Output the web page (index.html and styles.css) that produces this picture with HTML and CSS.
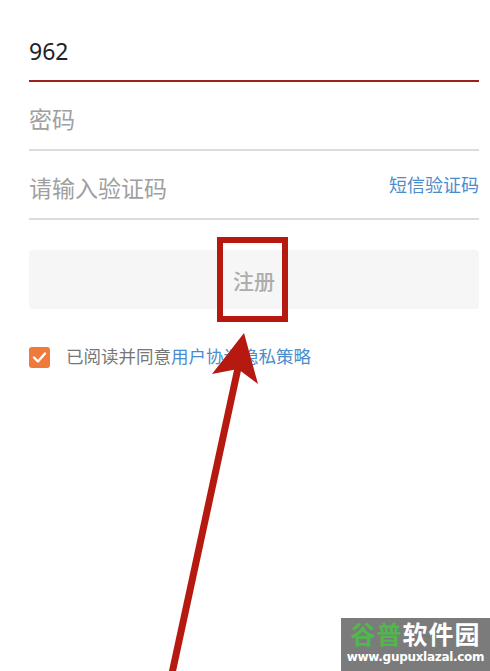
FILE: index.html
```html
<!DOCTYPE html>
<html lang="zh-CN">
<head>
    <meta charset="UTF-8">
    <meta name="viewport" content="width=device-width, initial-scale=1.0">
    <title>注册</title>
    <link rel="stylesheet" href="styles.css">
</head>
<body>
    <div class="form">
        <div class="field field-active">
            <span class="value">962</span>
        </div>
        <div class="field">
            <span class="placeholder">密码</span>
        </div>
        <div class="field">
            <span class="placeholder">请输入验证码</span>
            <span class="sms-link">短信验证码</span>
        </div>

        <div class="submit">注册</div>

        <div class="agree">
            <span class="checkbox">
                <svg viewBox="0 0 21 21" width="21" height="21">
                    <path d="M5 10.5 L9 14.5 L16 6.5" fill="none" stroke="#fff" stroke-width="2.4" stroke-linecap="round" stroke-linejoin="round"/>
                </svg>
            </span>
            <span class="agree-text">已阅读并同意<a class="link">用户协议</a><a class="link">隐私策略</a></span>
        </div>
    </div>

    <!-- annotation overlay -->
    <div class="mark-box"></div>
    <svg class="arrow" width="490" height="671" viewBox="0 0 490 671">
        <line x1="171" y1="678" x2="238" y2="368" stroke="#b5190f" stroke-width="7"/>
        <polygon points="244,333 258,384 238,369 212,374" fill="#b5190f"/>
    </svg>

    <div class="watermark">
        <div class="wm-title"><span class="wm-green">谷普</span>软件园</div>
        <div class="wm-url">www.gupuxlazal.com</div>
    </div>
</body>
</html>
```

FILE: styles.css
```css
body {
    margin: 0;
    background-color: #ffffff;
    font-family: "Noto Sans", "Noto Sans CJK SC", sans-serif;
    overflow: hidden;
}

.form {
    padding: 13px 11px 0 29px;
}

.field {
    height: 69px;
    box-sizing: border-box;
    padding-top: 5px;
    display: flex;
    align-items: center;
    justify-content: space-between;
    border-bottom: 2px solid #dcdcdc;
}

.field-active {
    padding-top: 8px;
    border-bottom-color: #9e1f1c;
}

.value {
    font-size: 23px;
    color: #222;
}

.placeholder {
    font-size: 23px;
    color: #a0a0a0;
}

.sms-link {
    font-size: 18px;
    color: #4b8ccc;
    margin-top: -6px;
}

.submit {
    margin-top: 30px;
    height: 59px;
    background-color: #f6f6f6;
    border-radius: 4px;
    display: flex;
    align-items: center;
    justify-content: center;
    font-size: 21px;
    font-weight: 500;
    color: #adadad;
}

.agree {
    margin-top: 38px;
    display: flex;
    align-items: center;
    gap: 16px;
}

.checkbox {
    width: 21px;
    height: 21px;
    border-radius: 3px;
    background-color: #ee7a3c;
    display: flex;
}

.agree-text {
    font-size: 17.5px;
    line-height: 21px;
    color: #777;
    margin-top: -3px;
}

.link {
    color: #4b8ccc;
}

.mark-box {
    position: absolute;
    left: 217px;
    top: 237px;
    width: 59px;
    height: 73px;
    border: 6px solid #b5190f;
}

.arrow {
    position: absolute;
    left: 0;
    top: 0;
}

.watermark {
    position: absolute;
    left: 341px;
    top: 618px;
    width: 149px;
    height: 53px;
    background-color: #7b7b7b;
    color: #fff;
    font-family: "Noto Sans CJK SC", sans-serif;
    font-weight: bold;
    text-align: center;
}

.wm-title {
    font-size: 25px;
    line-height: 30px;
    letter-spacing: 1px;
}

.wm-green {
    color: #4fb84c;
}

.wm-url {
    font-family: "DejaVu Sans", sans-serif;
    font-size: 12px;
    line-height: 18px;
    letter-spacing: -0.3px;
}
```
